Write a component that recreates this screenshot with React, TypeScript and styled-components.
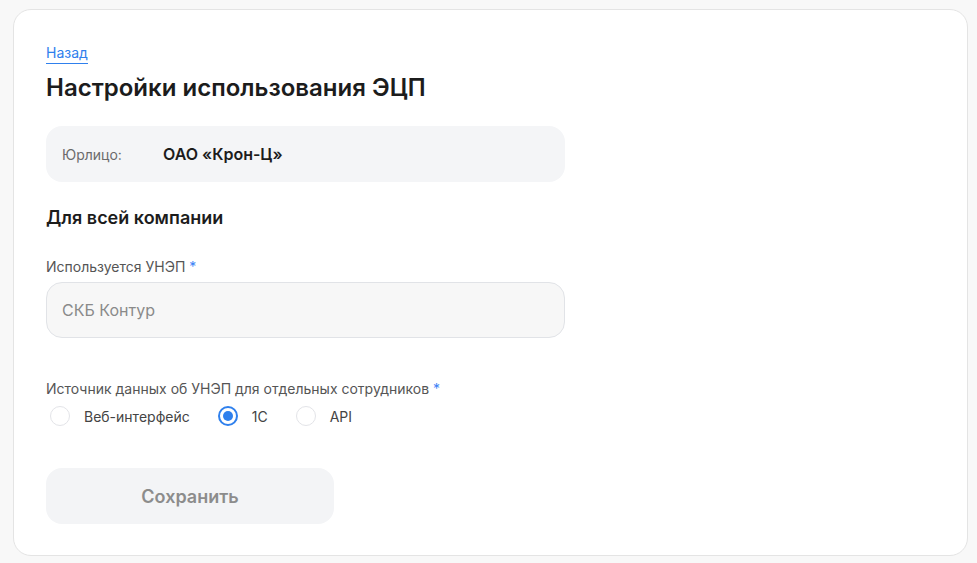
import React from "react";
import styled, { createGlobalStyle } from "styled-components";

const Global = createGlobalStyle`
  html, body { margin: 0; padding: 0; background: #f8f8f8; }
  body { font-family: Inter, "Noto Sans", sans-serif; color: #1f1f1f; }
  * { box-sizing: border-box; }
`;

const Page = styled.div`
  padding: 9px 9px 7px 13px;
`;

const Card = styled.div`
  background: #fff;
  border: 1px solid #e4e4e4;
  border-radius: 18px;
  height: 547px;
  padding: 34px 32px 0 32px;
  display: flex;
  flex-direction: column;
`;

const BackLink = styled.a`
  align-self: flex-start;
  font-size: 14px;
  line-height: 18px;
  color: #2f80ed;
  text-decoration: none;
  border-bottom: 1px solid #2f80ed;
  padding-bottom: 1px;
  cursor: pointer;
`;

const Title = styled.h1`
  margin: 9px 0 0 0;
  font-size: 24px;
  line-height: 30px;
  font-weight: 600;
  color: #1c1c1c;
`;

const InfoBox = styled.div`
  margin-top: 23px;
  width: 519px;
  height: 56px;
  background: #f4f5f7;
  border-radius: 16px;
  display: flex;
  align-items: center;
  padding: 0 16px;
`;

const InfoLabel = styled.span`
  width: 101px;
  font-size: 14px;
  color: #6b6b6b;
`;

const InfoValue = styled.span`
  font-size: 16px;
  font-weight: 600;
  color: #1c1c1c;
`;

const Section = styled.h2`
  margin: 24px 0 0 0;
  font-size: 18px;
  line-height: 24px;
  font-weight: 600;
  color: #1c1c1c;
`;

const FieldLabel = styled.div<{ $mt: number }>`
  margin-top: ${(p) => p.$mt}px;
  font-size: 14px;
  line-height: 20px;
  color: #555;
`;

const Req = styled.span`
  color: #3b82f6;
  margin-left: 4px;
`;

const Input = styled.div`
  margin-top: 5px;
  width: 519px;
  height: 56px;
  background: #f7f7f7;
  border: 1px solid #e1e3e7;
  border-radius: 16px;
  display: flex;
  align-items: center;
  padding: 0 15px;
  font-size: 16px;
  color: #8a8a8a;
`;

const RadioRow = styled.div`
  margin-top: 7px;
  display: flex;
  align-items: center;
  padding-left: 4px;
`;

const RadioItem = styled.label`
  display: flex;
  align-items: center;
  margin-right: 28px;
  font-size: 14px;
  color: #444;
  cursor: pointer;
`;

const Circle = styled.span<{ $on?: boolean }>`
  width: 20px;
  height: 20px;
  border-radius: 50%;
  border: ${(p) => (p.$on ? "2px solid #2f80ed" : "1px solid #e3e4e8")};
  background: #fff;
  margin-right: 14px;
  display: flex;
  align-items: center;
  justify-content: center;
  &::after {
    content: "";
    display: ${(p) => (p.$on ? "block" : "none")};
    width: 10px;
    height: 10px;
    border-radius: 50%;
    background: #2f80ed;
  }
`;

const SaveButton = styled.button`
  margin-top: 42px;
  width: 288px;
  height: 56px;
  border: none;
  border-radius: 16px;
  background: #f3f4f6;
  font-family: inherit;
  font-size: 18px;
  font-weight: 600;
  color: #8c8c8c;
`;

export default function App() {
  return (
    <>
      <Global />
      <Page>
        <Card>
          <BackLink>Назад</BackLink>
          <Title>Настройки использования ЭЦП</Title>
          <InfoBox>
            <InfoLabel>Юрлицо:</InfoLabel>
            <InfoValue>ОАО «Крон-Ц»</InfoValue>
          </InfoBox>
          <Section>Для всей компании</Section>
          <FieldLabel $mt={27}>
            Используется УНЭП<Req>*</Req>
          </FieldLabel>
          <Input>СКБ Контур</Input>
          <FieldLabel $mt={41}>
            Источник данных об УНЭП для отдельных сотрудников<Req>*</Req>
          </FieldLabel>
          <RadioRow>
            <RadioItem>
              <Circle />
              Веб-интерфейс
            </RadioItem>
            <RadioItem>
              <Circle $on />
              1С
            </RadioItem>
            <RadioItem>
              <Circle />
              API
            </RadioItem>
          </RadioRow>
          <SaveButton>Сохранить</SaveButton>
        </Card>
      </Page>
    </>
  );
}
